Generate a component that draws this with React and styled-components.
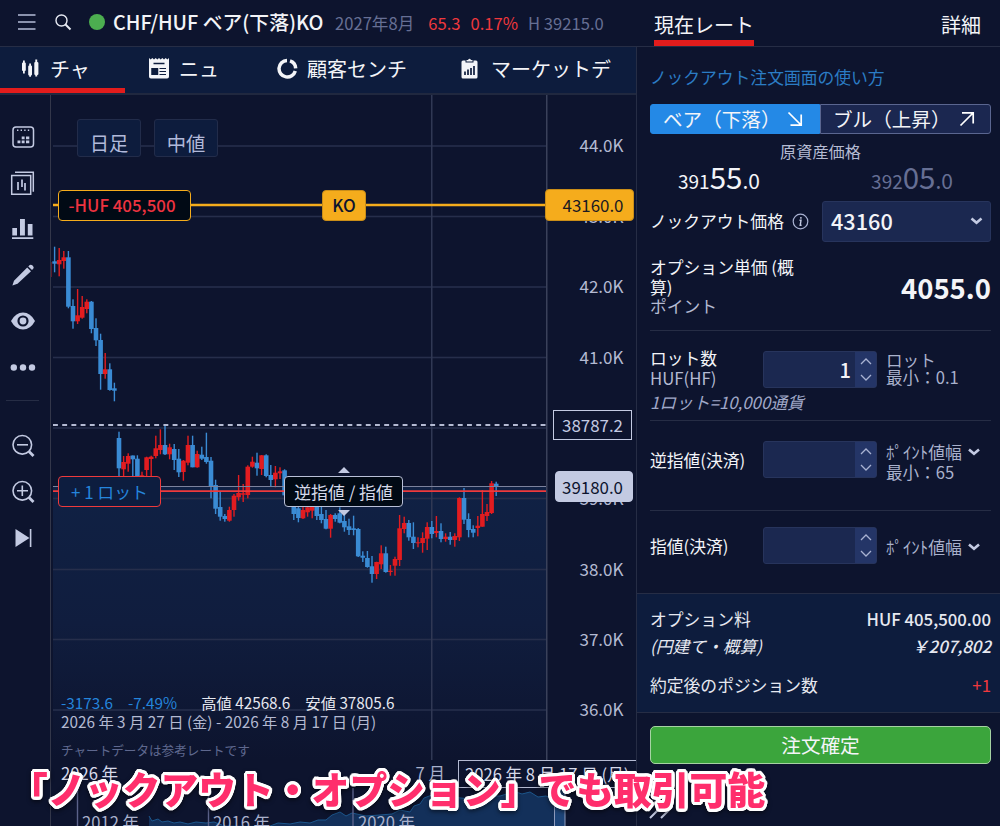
import styled, { createGlobalStyle } from "styled-components";

// [up, high, top, bottom, low] for every daily candle
const candles = [
  [0, 246.7, 261.3, 263.7, 272.3],
  [1, 248, 260, 264.3, 276.3],
  [1, 251, 257.3, 261, 268.7],
  [0, 251, 257.3, 306.7, 308.3],
  [0, 299.3, 306, 321.3, 328.7],
  [1, 289, 315.3, 321.3, 324],
  [1, 296, 307, 317.7, 318.7],
  [1, 299.3, 301.7, 309, 313.3],
  [0, 301, 301.7, 329, 333.3],
  [0, 318.3, 328, 340.3, 346],
  [0, 333.7, 340, 374, 389.7],
  [1, 353, 369.3, 374, 378.7],
  [0, 363.3, 369.3, 390, 390.7],
  [0, 382.7, 388.3, 390.7, 401.3],
  [0, 431.7, 438, 468.3, 477],
  [1, 456, 462, 469.3, 477],
  [1, 453.3, 456, 463.7, 471.7],
  [0, 455.5, 455.5, 459.3, 477],
  [0, 455.3, 458.7, 477, 480],
  [1, 471.7, 475.3, 478, 479],
  [1, 456.7, 457.3, 470, 478],
  [1, 455.7, 456.7, 459, 477],
  [1, 435.7, 448.3, 456, 458.3],
  [1, 429.3, 445, 450, 454.3],
  [0, 425.7, 445, 454.3, 455],
  [1, 443.7, 447.3, 454.3, 459.3],
  [0, 444, 449, 460, 470],
  [0, 449, 458.7, 472.3, 477],
  [1, 460, 460.7, 472, 480.7],
  [1, 435.7, 445, 462.7, 465.3],
  [0, 435.7, 445, 467.3, 467.3],
  [1, 450.7, 454, 467.3, 467.7],
  [0, 446.7, 454.7, 458.7, 460],
  [0, 432.7, 457, 462, 463.7],
  [0, 457, 460.7, 486.3, 498.3],
  [0, 479.7, 485, 508.7, 514],
  [0, 492, 507, 516.7, 520.7],
  [0, 514, 516, 519, 521.7],
  [1, 506.7, 510, 520.7, 521.7],
  [1, 494, 495.7, 510, 516.7],
  [1, 475, 493, 497.3, 500.7],
  [1, 484, 493.3, 494.7, 502],
  [1, 465.3, 466.7, 495, 498.3],
  [1, 456.7, 461.7, 466.7, 467.7],
  [0, 452.7, 462.7, 468.3, 475.7],
  [1, 455, 455.3, 469, 475],
  [0, 454.3, 455.3, 476, 477.3],
  [0, 465, 475, 480, 486],
  [1, 466, 472.7, 479.3, 487.3],
  [1, 467.3, 471.3, 473.3, 479],
  [0, 469.3, 470.3, 495.3, 496],
  [0, 478, 485, 498, 502],
  [0, 490, 497, 514, 520],
  [0, 500, 508.3, 518, 522.3],
  [1, 505, 510, 518.3, 519],
  [1, 504, 507.3, 512.3, 516.7],
  [1, 504, 506, 510.7, 518.3],
  [0, 504, 506, 516, 520],
  [0, 505, 514, 520, 523.3],
  [0, 510, 519, 528.7, 529.3],
  [1, 514, 515, 528.7, 537.7],
  [0, 513.3, 515, 519, 521.7],
  [0, 507.3, 513.3, 522.7, 523.3],
  [0, 515, 521, 527.3, 531.7],
  [0, 518.7, 526.3, 530, 535],
  [0, 515.7, 528.3, 530, 535.3],
  [0, 528, 529, 556.3, 557],
  [0, 551.3, 555.7, 557.7, 562],
  [0, 551, 558, 567, 567.7],
  [0, 556, 566.3, 574, 582.7],
  [1, 561.7, 562, 574, 579],
  [1, 545.3, 553.3, 564.3, 569],
  [0, 546.7, 553.3, 572, 572.7],
  [1, 565, 570.7, 572, 575.7],
  [1, 556.7, 559, 565.7, 575.7],
  [1, 515, 528.3, 560, 566],
  [1, 516.7, 523, 529, 533.3],
  [0, 520, 523, 537.3, 540.7],
  [0, 522.3, 536.7, 543, 549],
  [1, 537.3, 542.3, 543.3, 547.3],
  [1, 532.3, 538, 543, 552.7],
  [1, 522.3, 527, 538.7, 550],
  [0, 521, 527, 534, 538.3],
  [1, 516, 531, 533, 537.3],
  [0, 523.3, 531, 539, 542.3],
  [1, 533.3, 536.7, 539, 541.7],
  [0, 532, 536.7, 540, 544.7],
  [1, 533.3, 536, 540, 546.7],
  [1, 497.3, 498, 537.3, 541],
  [0, 488, 498, 519.7, 524],
  [0, 513.3, 519, 530, 537.3],
  [0, 525.3, 529, 532.7, 537.3],
  [1, 516, 525.7, 528, 536.3],
  [1, 490, 514, 526.7, 526.7],
  [1, 504, 512, 516, 521],
  [1, 481, 483.3, 513, 514],
  [0, 481.7, 483.7, 486, 496],
];

const priceTicks = [
  ["44.0K", 146],
  ["43.0K", 216.5],
  ["42.0K", 287],
  ["41.0K", 357.5],
  ["40.0K", 428],
  ["39.0K", 498.5],
  ["38.0K", 569.5],
  ["37.0K", 639.5],
  ["36.0K", 710],
];
// ticks that are covered by a price tag
const hiddenTicks = ["40.0K"];

function CandleChart() {
  return (
    <Plot viewBox="51 95 585 665">
      <defs>
        <linearGradient id="fade" x1="0" y1="0" x2="0" y2="1">
          <stop offset="0" stopColor="#102144" />
          <stop offset="0.5" stopColor="#101d3e" />
          <stop offset="1" stopColor="#0d142e" />
        </linearGradient>
      </defs>
      <rect x="53" y="487" width="493.5" height="273" fill="url(#fade)" />
      {priceTicks.map(([label, y]) => (
        <g key={label}>
          <rect x="53" y={y - 0.8} width="493" height="1.6" fill="#262e4b" />
          {!hiddenTicks.includes(label) && (
            <text x="623.5" y={y + 6} textAnchor="end">
              {label}
            </text>
          )}
        </g>
      ))}
      <rect x="431" y="95" width="1.5" height="665" fill="#303854" />
      <rect x="546" y="95" width="1.5" height="665" fill="#3a415a" />
      <rect x="51" y="262" width="1" height="15" fill="#5c1a2c" />
      {candles.map(([up, high, top, bottom, low], i) => {
        const x = 54.6 + i * 4.6;
        return (
          <g key={i} fill={up ? "#e21c20" : "#3a8bd4"}>
            <rect x={x - 0.7} y={high} width="1.4" height={low - high} />
            <rect x={x - 2.3} y={top} width="4.6" height={bottom - top} />
          </g>
        );
      })}
      <path d="M53 425H546" stroke="#b4bad2" strokeWidth="1.8" strokeDasharray="4.9 4.3" />
      <path d="M53 486.5H546" stroke="#7c829d" strokeWidth="1.2" />
      <path d="M53 491.2H546" stroke="#ee3a3c" strokeWidth="1.8" />
      <path d="M53 205H560" stroke="#f5ac1c" strokeWidth="2.7" />
      <path d="M338 473L344 467L350 473Z M338 510L344 516L350 510Z" fill="#c3cae2" />
    </Plot>
  );
}

function Navigator() {
  return (
    <NavSvg viewBox="51 788 585 38">
      <path
        d="M149 826V816L152 821L158 819L162 822L168 821L174 823L180 822L188 824L196 822L206 823L214 822L222 825L270 826L278 823L290 824L300 822L310 823L318 820L326 820L332 815L340 812L346 816L352 813L366 816L380 815L392 814L400 810L410 812L414 806L420 804L424 798L432 795L440 800L452 797L470 799L485 796L500 796L510 793L516 792L522 794L530 792L538 797L546 796L554 799V826Z"
        fill="#13305a"
      />
      <path
        d="M149 816L152 821L158 819L162 822L168 821L174 823L180 822L188 824L196 822L206 823L214 822L222 825M270 826L278 823L290 824L300 822L310 823L318 820L326 820L332 815L340 812L346 816L352 813L366 816L380 815L392 814L400 810L410 812L414 806L420 804L424 798L432 795L440 800L452 797L470 799L485 796L500 796L510 793L516 792L522 794L530 792L538 797L546 796L554 799"
        fill="none"
        stroke="#1c568c"
      />
      <path d="M77.5 788V826M208.5 788V826M353 788V826" stroke="#5b628a" strokeWidth="1.4" />
      <rect x="554.5" y="787" width="10.5" height="42" fill="#1d4478" stroke="#8e9bbd" />
      <text x="82" y="829">2012 年</text>
      <text x="213" y="829">2016 年</text>
      <text x="358" y="829">2020 年</text>
    </NavSvg>
  );
}

const toolIcons = {
  layout: (
    <g fill="#c3cae2">
      <rect x="4" y="4" width="20.5" height="20" rx="3" fill="none" stroke="#c3cae2" strokeWidth="1.5" />
      <path d="M8 6.5h1.4v1.4H8zM11.6 6.5h1.4v1.4h-1.4zM15.2 6.5h1.4v1.4h-1.4zM18.8 6.5h1.4v1.4h-1.4z" />
      <path d="M8.5 17.4h2.9v2.9H8.5zM12.7 17.4h2.9v2.9h-2.9zM17 17.4h3.3v2.9H17zM12.7 13.4h2.9v2.9h-2.9zM17 13.4h3.3v2.9H17z" />
    </g>
  ),
  compare: (
    <g fill="none" stroke="#c3cae2" strokeWidth="1.5">
      <path d="M2.7 6.5h19v18.800h-19z" />
      <path d="M6 3.2h18.300v19.500" />
      <path d="M9 13v8M13 10.500v7.500M16 14v7.500" strokeWidth="1.700" />
    </g>
  ),
  bars: (
    <path d="M3.300 13h4.700v7.500H3.300zM11 4h4.900v16.500H11zM18.800 9h4.700v11.500h-4.700zM3 22.300h21.300v1.800H3z" fill="#c3cae2" />
  ),
  pencil: (
    <path d="M3.400 24.500L5 19.800L18.200 6.600L22 10.200L8.500 22.800ZM19.300 5.400L20.700 4.100Q22 3.100 23.300 4.300L24.300 5.400Q25.200 6.700 24.200 7.700L23 8.900Z" fill="#c3cae2" />
  ),
  eye: (
    <g>
      <path d="M2 14Q6.500 5.500 14 5.500T26 14Q21.500 22.500 14 22.500T2 14Z" fill="#c3cae2" />
      <circle cx="14" cy="14" r="4.500" fill="#c3cae2" stroke="#0d142e" strokeWidth="2.200" />
    </g>
  ),
  more: (
    <g fill="#c3cae2">
      <circle cx="4.800" cy="14.500" r="3.200" />
      <circle cx="14" cy="14.500" r="3.200" />
      <circle cx="23" cy="14.500" r="3.200" />
    </g>
  ),
  zoomOut: (
    <g fill="none" stroke="#c3cae2" strokeWidth="1.600">
      <circle cx="13.300" cy="12.800" r="9.300" />
      <path d="M8 12.800h11" />
      <path d="M20 19.500L24.500 24" strokeWidth="2.800" />
    </g>
  ),
  zoomIn: (
    <g fill="none" stroke="#c3cae2" strokeWidth="1.600">
      <circle cx="13.300" cy="12.800" r="9.300" />
      <path d="M8 12.800h11M13.300 7.500v10.600" />
      <path d="M20 19.500L24.500 24" strokeWidth="2.800" />
    </g>
  ),
  skip: <path d="M6.500 5L20.500 14L6.500 23ZM20.800 5h1.600v18h-1.600z" fill="#c3cae2" />,
};

const Tool = ({ name }) => (
  <ToolSlot>
    <svg width="28" height="28" viewBox="0 0 28 28">
      {toolIcons[name]}
    </svg>
  </ToolSlot>
);

const Chevron = ({ width = 12 }) => (
  <svg width={width} height="8" viewBox="0 0 12 8">
    <path d="M1 1.500L6 5.800L11 1.500" fill="none" stroke="#c3cae2" strokeWidth="2.600" />
  </svg>
);

const NumberInput = ({ value }) => (
  <InputBox>
    <span>{value}</span>
    <Spinner>
      <svg width="12" height="26" viewBox="0 0 12 26">
        <path d="M1 7L6 2L11 7M1 18L6 23L11 18" fill="none" stroke="#a9b2d2" strokeWidth="1.300" />
      </svg>
    </Spinner>
  </InputBox>
);

const PointUnit = ({ min }) => (
  <Unit $line={21} $top={min ? 0 : 9}>
    <div>
      <UnitName>ﾎﾟｲﾝﾄ値幅</UnitName>
      <Chevron />
    </div>
    {min && <div>最小：{min}</div>}
  </Unit>
);

function OrderPanel() {
  return (
    <Order>
      <Form>
        <HelpLink>ノックアウト注文画面の使い方</HelpLink>
        <Toggle>
          <ToggleButton $active>
            ベア（下落）
            <svg width="16" height="16" viewBox="0 0 16 16">
              <path d="M1.500 1.500L14 14M14.200 3.500V14.200H3.500" fill="none" stroke="#fff" strokeWidth="1.700" />
            </svg>
          </ToggleButton>
          <ToggleButton>
            ブル（上昇）
            <svg width="16" height="16" viewBox="0 0 16 16">
              <path d="M1.500 14.500L14 2M3 1.800H14.200V12.500" fill="none" stroke="#fff" strokeWidth="1.700" />
            </svg>
          </ToggleButton>
        </Toggle>
        <AssetLabel>原資産価格</AssetLabel>
        <Prices>
          <Price>
            391<b>55</b>
            <i>.0</i>
          </Price>
          <Price $dim>
            392<b>05</b>
            <i>.0</i>
          </Price>
        </Prices>
        <KnockRow>
          <Label>ノックアウト価格</Label>
          <svg width="17" height="17" viewBox="0 0 17 17">
            <circle cx="8.500" cy="8.500" r="7.300" fill="none" stroke="#a9b2d2" strokeWidth="1.200" />
            <path d="M7.500 7.300h1.500l-.8 5h1.400M8.900 4v1.700" fill="none" stroke="#c3cae2" strokeWidth="1.400" />
          </svg>
          <Select>
            43160
            <Chevron width={13} />
          </Select>
        </KnockRow>
        <UnitPrice>
          <div>
            <Label>オプション単価 (概算)</Label>
            <Sub>ポイント</Sub>
          </div>
          <strong>4055.0</strong>
        </UnitPrice>
        <Field $height={90}>
          <LotLabel>
            <Label>ロット数</Label>
            <Sub>HUF(HF)</Sub>
            <Note>1ロット=10,000通貨</Note>
          </LotLabel>
          <NumberInput value="1" />
          <Unit $line={17} $top={1}>
            <div>ロット</div>
            <div>最小：0.1</div>
          </Unit>
        </Field>
        <Field $height={90}>
          <FieldLabel>逆指値(決済)</FieldLabel>
          <NumberInput />
          <PointUnit min="65" />
        </Field>
        <Field $height={82} $last>
          <FieldLabel>指値(決済)</FieldLabel>
          <NumberInput />
          <PointUnit />
        </Field>
      </Form>
      <Summary>
        <SummaryRow>
          <span>オプション料</span>
          <b>HUF 405,500.00</b>
        </SummaryRow>
        <SummaryRow $italic>
          <span>(円建て・概算)</span>
          <b>￥207,802</b>
        </SummaryRow>
        <SummaryRow $spaced>
          <span>約定後のポジション数</span>
          <Change>+1</Change>
        </SummaryRow>
      </Summary>
      <Submit>注文確定</Submit>
      <Grip width="24" height="20" viewBox="0 0 24 20">
        <path d="M1 17L15 3M12 17L26 3" stroke="#c3cae2" strokeWidth="2" />
      </Grip>
    </Order>
  );
}

function App() {
  return (
    <Screen>
      <GlobalStyle />
      <TopBar>
        <Instrument>
          <svg width="18" height="16" viewBox="0 0 18 16">
            <path d="M0 1h17.500M0 8h17.500M0 15h17.500" stroke="#b4bcd8" strokeWidth="1.500" />
          </svg>
          <SearchIcon width="17" height="17" viewBox="0 0 17 17">
            <circle cx="6.500" cy="6.500" r="5.500" fill="none" stroke="#e6e9f2" strokeWidth="1.400" />
            <path d="M10.500 10.500L15.500 15.500" stroke="#e6e9f2" strokeWidth="2" />
          </SearchIcon>
          <Dot />
          <h1>CHF/HUF ベア(下落)KO</h1>
          <Meta>2027年8月</Meta>
          <Meta $red>65.3</Meta>
          <Meta $red>0.17%</Meta>
          <Meta>H 39215.0</Meta>
        </Instrument>
        <PanelTabs>
          <PanelTab $active>現在レート</PanelTab>
          <PanelTab>詳細</PanelTab>
        </PanelTabs>
      </TopBar>
      <Main>
        <Left>
          <Tabs>
            <Tab $active $pad={21} $width={125} $gap={10}>
              <svg width="19" height="19" viewBox="0 0 19 19">
                <path d="M1 4.500q0-1 1-1V1.500h1.800v2q1 0 1 1v6.500q0 1-1 1v2.500H2V12q-1 0-1-1zM7.200 7.500q0-1 1-1v-2H10v2q1 0 1 1v8q0 1-1 1v1.200H8.200v-1.200q-1 0-1-1zM13.300 4q0-1 1-1V.500h1.900V3q1.200 0 1.200 1v11q0 1-1.200 1v1.500h-1.900V16q-1 0-1-1z" fill="#f3f4f8" />
              </svg>
              チャ
            </Tab>
            <Tab $pad={24} $width={128} $gap={10}>
              <svg width="20" height="21" viewBox="0 0 20 21">
                <path d="M0 0l1.700 1.600L3.300 0L5 1.600L6.700 0l1.600 1.600L10 0l1.700 1.600L13.300 0L15 1.600L16.700 0l1.600 1.600L20 0v18.500q0 2-2 2H2q-2 0-2-2z" fill="#f3f4f8" />
                <path d="M4.500 5.500h11M3 10.800h5.500v5.500H3z" fill="#0d1c3d" stroke="#0d1c3d" strokeWidth="1.500" />
                <path d="M10.500 10.500h6.500M10.500 13.500h6.500M10.500 16.500h6.500" stroke="#0d1c3d" strokeWidth="1" />
              </svg>
              ニュ
            </Tab>
            <Tab $pad={24} $width={182} $gap={9}>
              <svg width="21" height="21" viewBox="0 0 21 21">
                <path d="M10 2.400A8.300 8.300 0 1 0 18.300 13" fill="none" stroke="#f3f4f8" strokeWidth="3.500" />
                <path d="M18.700 10.300A8.300 8.300 0 0 0 13 2.900" fill="none" stroke="#f3f4f8" strokeWidth="3.500" />
              </svg>
              顧客センチ
            </Tab>
            <Tab $pad={26} $width={200} $gap={13}>
              <svg width="17" height="21" viewBox="0 0 17 21">
                <path d="M2 2.500h2.500v2h8v-2H15q1.500 0 1.500 1.500v15q0 1.500-1.500 1.500H2q-1.500 0-1.500-1.500V4Q.5 2.500 2 2.500zM5.500 3.500V2H7Q8.500-.5 10 2h1.500v1.500z" fill="#f3f4f8" />
                <path d="M4 13.500v3.500M7 11.500v5.500M10 10v7M13 8v9" stroke="#0d1c3d" strokeWidth="1.700" />
              </svg>
              マーケットデ
            </Tab>
          </Tabs>
          <Workspace>
            <Sidebar>
              <Tool name="layout" />
              <Tool name="compare" />
              <Tool name="bars" />
              <Tool name="pencil" />
              <Tool name="eye" />
              <Tool name="more" />
              <ToolDivider />
              <Tool name="zoomOut" />
              <Tool name="zoomIn" />
              <Tool name="skip" />
            </Sidebar>
            <ChartColumn>
              <Stage>
                <CandleChart />
                <ChartOptions>
                  <button>日足</button>
                  <button>中値</button>
                </ChartOptions>
                <Tag $x={7} $y={94.500} $w={133} $border="#f5ac1c" $color="#ee3340" $shift={-5}>
                  -HUF 405,500
                </Tag>
                <Tag $x={271} $y={94.500} $w={44} $bg="#f5ac1c" $border="#c98d18" $color="#0d142e">
                  KO
                </Tag>
                <Tag $x={494} $y={94} $w={89} $h={32} $bg="#f5ac1c" $border="#c98d18" $color="#1b1a22" $shift={7} $thin>
                  43160.0
                </Tag>
                <Tag $x={502} $y={315} $w={79} $h={30} $bg="#0d142e" $border="#c3cae2" $color="#c3cae2" $thin $square>
                  38787.2
                </Tag>
                <Tag $x={504} $y={376} $w={78} $h={31} $bg="#c3cae2" $border="#c3cae2" $color="#0d142e" $shift={-3} $thin>
                  39180.0
                </Tag>
                <Tag $x={7} $y={381} $w={103} $bg="#0d1d3f" $border="#ee3a3c" $color="#2585dc" $thin>
                  + 1 ロット
                </Tag>
                <Tag $x={233} $y={381} $w={119} $h={31} $border="#b9c0d8" $color="#d6daea" $thin>
                  逆指値 / 指値
                </Tag>
                <ChartInfo>
                  <Stats>
                    <em>-3173.6</em>
                    <em>-7.49%</em>
                    <span>高値 42568.6</span>
                    <span>安値 37805.6</span>
                  </Stats>
                  <div>2026 年 3 月 27 日 (金) - 2026 年 8 月 17 日 (月)</div>
                  <small>チャートデータは参考レートです</small>
                </ChartInfo>
              </Stage>
              <DateAxis>
                <span>2026 年</span>
                <Month>7 月</Month>
                <CurrentDate>2026 年 8 月 17 日 (月)</CurrentDate>
              </DateAxis>
              <Navigator />
            </ChartColumn>
          </Workspace>
        </Left>
        <OrderPanel />
      </Main>
      <Caption>「ノックアウト・オプション」でも取引可能</Caption>
    </Screen>
  );
}

const GlobalStyle = createGlobalStyle`
  * {
    box-sizing: border-box;
  }

  body {
    margin: 0;
    background: #0d142e;
    overflow: hidden;
  }

  svg {
    display: block;
    flex: none;
  }

  button {
    font: inherit;
  }
`;

const Screen = styled.div`
  position: relative;
  width: 1000px;
  height: 826px;
  overflow: hidden;
  background: #0d142e;
  color: #f3f4f8;
  font-family: "Noto Sans CJK JP", "Noto Sans", sans-serif;
  font-size: 16.8px;
  white-space: nowrap;
`;

const TopBar = styled.header`
  display: flex;
  height: 47px;
  border-bottom: 1px solid #262d45;
`;

const Instrument = styled.div`
  display: flex;
  align-items: center;
  width: 636px;
  height: 44px;
  padding-left: 18px;

  h1 {
    margin: 0 11px 0 8px;
    width: 211px;
    font-size: 19.8px;
    font-weight: 500;
    line-height: 28px;
  }
`;

const SearchIcon = styled.svg`
  margin-left: 19px;
`;

const Dot = styled.span`
  width: 16px;
  height: 16px;
  margin-left: 17px;
  border-radius: 50%;
  background: #4cae50;
`;

const Meta = styled.span`
  padding-top: 1px;
  color: ${({ $red }) => ($red ? "#f0383d" : "#666f94")};
  font-size: 16.6px;
  line-height: 28px;
  margin-right: ${({ $red }) => ($red ? "10px" : "14px")};

  & + &:last-child {
    margin-left: -3px;
  }
`;

const PanelTabs = styled.div`
  display: flex;
  justify-content: space-between;
  flex: 1;
  padding: 0 19px 0 18px;
`;

const PanelTab = styled.div`
  height: 46px;
  padding-top: 10px;
  font-size: 20px;
  font-weight: 400;
  line-height: 30px;
  border-bottom: 6px solid ${({ $active }) => ($active ? "#e21c1c" : "transparent")};
`;

const Main = styled.div`
  display: grid;
  grid-template-columns: 636px 364px;
  height: 779px;
`;

const Left = styled.div`
  display: flex;
  flex-direction: column;
`;

const Tabs = styled.nav`
  display: flex;
  height: 48px;
  background: #0d1c3d;
  border-bottom: 2px solid #20283f;
`;

const Tab = styled.div`
  display: flex;
  align-items: center;
  gap: ${({ $gap }) => $gap}px;
  width: ${({ $width }) => $width}px;
  height: 46px;
  padding-left: ${({ $pad }) => $pad}px;
  font-size: 20px;
  font-weight: 400;
  line-height: 30px;
  border-bottom: ${({ $active }) => ($active ? "5px solid #e21c1c" : "0 none")};
  ${({ $active }) => ($active ? "padding-top: 2px;" : "padding-bottom: 3px;")}
`;

const Workspace = styled.div`
  display: flex;
  flex: 1;
`;

const Sidebar = styled.aside`
  width: 51px;
  padding-top: 19px;
  border-right: 1px solid #33374a;
`;

const ToolSlot = styled.div`
  height: 46px;
  padding: 9px 0 0 9px;
`;

const ToolDivider = styled.div`
  height: 1px;
  margin: 10px 11px 22px 6px;
  background: #262d45;
`;

const ChartColumn = styled.div`
  width: 585px;
`;

const Stage = styled.div`
  position: relative;
  height: 665px;
`;

const Plot = styled.svg`
  width: 585px;
  height: 665px;

  text {
    fill: #b4bad2;
    font-size: 17px;
  }
`;

const ChartOptions = styled.div`
  position: absolute;
  top: 24px;
  left: 26px;
  display: flex;
  gap: 13px;

  button {
    width: 64px;
    height: 38px;
    padding: 9px 0 0;
    border: 1px solid #222c4a;
    border-radius: 3px;
    background: #0d1c3d;
    color: #b1b9da;
    font-size: 19.3px;
    line-height: 26px;
  }
`;

const Tag = styled.div`
  position: absolute;
  left: ${({ $x }) => $x}px;
  top: ${({ $y }) => $y}px;
  width: ${({ $w }) => $w}px;
  height: ${({ $h }) => $h || 31}px;
  display: flex;
  align-items: center;
  justify-content: center;
  text-indent: ${({ $shift }) => $shift || 0}px;
  border: 1.5px solid ${({ $border }) => $border};
  border-radius: ${({ $square }) => ($square ? 0 : 4)}px;
  background: ${({ $bg }) => $bg || "#010a15"};
  color: ${({ $color }) => $color};
  font-size: 16.9px;
  font-weight: ${({ $thin }) => ($thin ? 400 : 500)};
  line-height: 24px;
`;

const ChartInfo = styled.div`
  position: absolute;
  left: 10px;
  top: 598px;
  color: #b4bad2;
  font-size: 15.3px;
  line-height: 19px;

  small {
    display: block;
    margin-top: 11px;
    font-size: 12.6px;
    line-height: 16px;
    color: #5f688e;
  }
`;

const Stats = styled.div`
  display: flex;
  gap: 15px;
  color: #e6e8f0;

  em {
    font-style: normal;
    color: #2585dc;
  }

  em + span {
    margin-left: 9px;
  }
`;

const DateAxis = styled.div`
  display: flex;
  height: 28px;
  padding-left: 10px;
  color: #d6daea;
  font-size: 16.6px;
  line-height: 26px;
`;

const Month = styled.span`
  margin-left: auto;
  margin-right: 13px;
  color: #a9b1cc;
`;

const CurrentDate = styled.span`
  width: 178px;
  padding-left: 6px;
  border: 1px solid #b4bad2;
  border-right: 0;
`;

const NavSvg = styled.svg`
  width: 585px;
  height: 38px;

  text {
    fill: #a9b1cc;
    font-size: 16.6px;
  }
`;

const Order = styled.section`
  display: flex;
  flex-direction: column;
  border-left: 1px solid #262d45;
`;

const Form = styled.div`
  padding: 0 9px 0 13px;
  height: 546px;
`;

const HelpLink = styled.div`
  padding: 18px 0 15px;
  color: #2b7cc4;
  line-height: 24px;
`;

const Toggle = styled.div`
  display: grid;
  grid-template-columns: 170px 171px;
  height: 30px;
`;

const ToggleButton = styled.div`
  display: flex;
  align-items: center;
  justify-content: space-between;
  padding: 0 ${({ $active }) => ($active ? 16 : 15)}px 0 12px;
  border: 1px solid ${({ $active }) => ($active ? "#2489e6" : "#5a6690")};
  border-radius: ${({ $active }) => ($active ? "3px 0 0 3px" : "0 3px 3px 0")};
  background: ${({ $active }) => ($active ? "#2489e6" : "#1b2750")};
  font-size: 19.6px;
  font-weight: 400;
  line-height: 26px;
`;

const AssetLabel = styled.div`
  margin-top: 7px;
  text-align: center;
  color: #b4bad2;
  font-size: 16.2px;
  line-height: 20px;
`;

const Prices = styled.div`
  display: flex;
  justify-content: space-between;
  height: 40px;
  padding: 0 38px 0 28px;
`;

const Price = styled.div`
  color: ${({ $dim }) => ($dim ? "#666f94" : "#f3f4f8")};
  font-size: 19px;
  line-height: 30px;

  b {
    font-size: 29.5px;
    font-weight: 400;
  }

  i {
    font-size: 21px;
    font-style: normal;
  }
`;

const KnockRow = styled.div`
  display: flex;
  align-items: center;
  gap: 8px;
  height: 40px;
`;

const Label = styled.div`
  font-weight: 400;
  line-height: 20px;
`;

const Sub = styled.div`
  color: #b4bad2;
  line-height: 20px;
`;

const Select = styled.div`
  display: flex;
  align-items: center;
  justify-content: space-between;
  width: 169px;
  height: 41px;
  margin-left: auto;
  padding: 0 7px 0 8px;
  border: 1px solid #27345c;
  border-radius: 3px;
  background: #1b2850;
  font-size: 21.7px;
  font-weight: 500;
  line-height: 30px;
`;

const UnitPrice = styled.div`
  display: flex;
  justify-content: space-between;
  height: 90px;
  padding-top: 16px;
  border-bottom: 1px solid #262d45;

  ${Label} {
    width: 150px;
    white-space: normal;
    word-break: break-all;
  }

  ${Sub} {
    line-height: 18px;
  }

  strong {
    padding-top: 10px;
    font-size: 27.5px;
    font-weight: 700;
    line-height: 40px;
  }
`;

const Field = styled.div`
  display: grid;
  grid-template-columns: 113px 114px 1fr;
  height: ${({ $height }) => $height}px;
  padding-top: ${({ $last }) => ($last ? 16 : 20)}px;
  border-bottom: ${({ $last }) => ($last ? "0 none" : "1px solid #262d45")};
`;

const FieldLabel = styled(Label)`
  line-height: 39px;
`;

const LotLabel = styled.div`
  margin-top: -3px;
`;

const Note = styled.div`
  margin-top: 4px;
  color: #a0a8c8;
  font-style: italic;
  line-height: 20px;
`;

const InputBox = styled.div`
  display: flex;
  height: 37px;
  border: 1px solid #27345c;
  border-radius: 3px;
  background: #1b2850;

  span {
    flex: 1;
    padding-right: 4px;
    text-align: right;
    font-size: 20px;
    font-weight: 500;
    line-height: 36px;
  }
`;

const Spinner = styled.div`
  display: flex;
  align-items: center;
  justify-content: center;
  width: 21px;
  background: #243567;
`;

const Unit = styled.div`
  padding: ${({ $top }) => $top}px 0 0 9px;
  color: #a9b1cc;
  font-size: 16.6px;
  line-height: ${({ $line }) => $line}px;

  > div {
    display: flex;
    align-items: center;
    gap: 6px;
  }
`;

const UnitName = styled.span`
  width: 76px;
  font-size: 16.9px;
`;

const Summary = styled.div`
  height: 120px;
  padding: 12px 9px 0 13px;
  border-top: 1px solid #262d45;
  border-bottom: 1px solid #262d45;
  background: #0d1c3d;
`;

const SummaryRow = styled.div`
  display: flex;
  justify-content: space-between;
  margin-top: ${({ $spaced }) => ($spaced ? 12 : 0)}px;
  font-style: ${({ $italic }) => ($italic ? "italic" : "normal")};
  color: #e6e8f0;
  line-height: 27px;

  b {
    font-weight: 500;
  }
`;

const Change = styled.span`
  color: #f0383d;
`;

const Submit = styled.button`
  height: 38px;
  margin: 13px 9px 0 13px;
  padding: 0;
  border: 1.5px solid #a6d3a3;
  border-radius: 5px;
  background: #3ba53c;
  color: #f3f4f8;
  font-size: 19.6px;
  font-weight: 400;
  line-height: 34px;
`;

const Grip = styled.svg`
  margin: 37px 0 0 12px;
`;

// ring of hard shadows, gives the caption a round white outline
const outline = Array.from({ length: 24 }, (_, i) => {
  const angle = (i / 24) * Math.PI * 2;
  return `${(Math.cos(angle) * 3).toFixed(2)}px ${(Math.sin(angle) * 3).toFixed(2)}px 0 #fff`;
}).join(", ");

const Caption = styled.div`
  position: absolute;
  left: 10px;
  top: 764px;
  color: #ff2e6c;
  font-size: 37.8px;
  font-weight: 900;
  line-height: 48px;
  text-shadow: ${outline};
  filter: drop-shadow(0 2px 2px rgba(0, 0, 0, 0.5));
`;

export default App;
